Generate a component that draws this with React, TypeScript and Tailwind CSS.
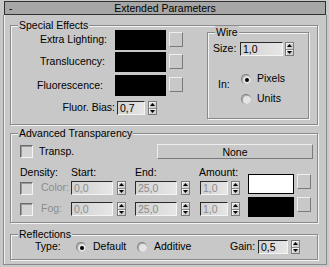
import React from "react";

const Spinner = () => (
  <div className="w-[9px] h-[14px] flex flex-col border border-[#7a7a7a] bg-[#d0d0d0] shrink-0">
    <div className="flex-1 flex items-center justify-center border-b border-[#8a8a8a] shadow-[inset_1px_1px_0_#f4f4f4]">
      <svg width="5" height="3" viewBox="0 0 5 3"><path d="M2.5 0L5 3H0z" fill="#000" /></svg>
    </div>
    <div className="flex-1 flex items-center justify-center shadow-[inset_1px_1px_0_#f4f4f4]">
      <svg width="5" height="3" viewBox="0 0 5 3"><path d="M0 0H5L2.5 3z" fill="#000" /></svg>
    </div>
  </div>
);

const NumInput = ({ value, w, disabled }: { value: string; w: string; disabled?: boolean }) => (
  <div
    className={`${w} h-[14px] shrink-0 border-t border-l border-t-[#2a2a2a] border-l-[#2a2a2a] border-b border-r border-b-[#f4f4f4] border-r-[#f4f4f4] bg-gradient-to-r from-[#d2d2d2] to-[#e6e6e6] pl-[2px] leading-[12px] ${
      disabled ? "text-[#8c8c8c]" : "text-black"
    }`}
  >
    {value}
  </div>
);

const Check = () => (
  <div className="w-[13px] h-[13px] shrink-0 border-t border-l border-t-[#6a6a6a] border-l-[#6a6a6a] border-b border-r border-b-[#f4f4f4] border-r-[#f4f4f4] bg-[#d4d4d4] shadow-[inset_1px_1px_0_#9a9a9a]" />
);

const Radio = ({ on }: { on?: boolean }) => (
  <div className="w-[10px] h-[10px] shrink-0 rounded-full bg-[#e4e4e4] border-t border-l border-[#808080] border-b-[#f6f6f6] border-r-[#f6f6f6] flex items-center justify-center shadow-[inset_1px_1px_0_#a8a8a8]">
    {on && <div className="w-[4px] h-[4px] rounded-full bg-black" />}
  </div>
);

const SmallBtn = () => (
  <div className="w-[14px] h-[15px] shrink-0 bg-[#c8c8c8] border border-t-[#eeeeee] border-l-[#eeeeee] border-b-[#7a7a7a] border-r-[#7a7a7a]" />
);

const Group = ({
  label,
  className,
  children,
}: {
  label: string;
  className: string;
  children: React.ReactNode;
}) => (
  <div
    className={`relative border border-[#8a8a8a] shadow-[inset_1px_1px_0_#f2f2f2,1px_1px_0_#f2f2f2] ${className}`}
  >
    <div className="absolute left-[7px] -top-[7px] bg-[#c8c8c8] px-[1px] leading-[12px]">{label}</div>
    {children}
  </div>
);

export default function App() {
  return (
    <div className="w-[329px] h-[267px] bg-[#c8c8c8] overflow-hidden flex flex-col pt-[1px] pl-[3px] pr-[2px] pb-[2px] font-['Liberation_Sans',Arial,sans-serif] text-[10.5px] text-black">
      {/* title bar */}
      <div className="ml-[1px] mr-[1px] h-[14px] shrink-0 bg-[#a6a6a6] border border-[#303030] relative flex items-center justify-center leading-[12px]">
        <span className="absolute left-[4px] top-[0px]">-</span>
        <span>Extended Parameters</span>
      </div>

      {/* panel */}
      <div className="flex-1 border-l border-r border-b border-[#8a8a8a] shadow-[inset_1px_0_0_#eeeeee] pl-[6px] pr-[8px] pt-[10px] flex flex-col">
        {/* Special Effects */}
        <Group label="Special Effects" className="h-[100px] shrink-0 flex">
          <div className="w-[172px] shrink-0 flex flex-col pt-[4px]">
            <div className="flex items-center h-[20px]">
              <div className="w-[96px] text-right">Extra Lighting:</div>
              <div className="ml-[8px] w-[51px] h-[20px] bg-black" />
              <div className="ml-[3px] self-start mt-[2px]">
                <SmallBtn />
              </div>
            </div>
            <div className="flex items-center h-[20px] mt-[2px]">
              <div className="w-[94px] text-right">Translucency:</div>
              <div className="ml-[10px] w-[51px] h-[20px] bg-black" />
              <div className="ml-[3px] self-start mt-[2px]">
                <SmallBtn />
              </div>
            </div>
            <div className="flex items-center h-[21px] mt-[3px]">
              <div className="w-[92px] text-right">Fluorescence:</div>
              <div className="ml-[12px] w-[51px] h-[21px] bg-black" />
              <div className="ml-[3px] self-start mt-[2px]">
                <SmallBtn />
              </div>
            </div>
            <div className="flex items-center h-[14px] mt-[5px]">
              <div className="w-[104px] text-right">Fluor. Bias:</div>
              <div className="ml-[2px]">
                <NumInput value="0,7" w="w-[28px]" />
              </div>
              <div className="ml-[3px]">
                <Spinner />
              </div>
            </div>
          </div>
          <div className="ml-[24px] mt-[6px] w-[102px] h-[87px]">
            <Group label="Wire" className="w-[102px] h-[87px] flex flex-col">
              <div className="flex items-center h-[14px] mt-[9px] pl-[5px]">
                <div className="w-[27px]">Size:</div>
                <NumInput value="1,0" w="w-[43px]" />
                <div className="ml-[2px]">
                  <Spinner />
                </div>
              </div>
              <div className="flex mt-[16px] pl-[10px]">
                <div className="w-[23px] mt-[6px] leading-[12px]">In:</div>
                <div className="flex flex-col">
                  <div className="flex items-center h-[14px]">
                    <Radio on />
                    <span className="ml-[6px]">Pixels</span>
                  </div>
                  <div className="flex items-center h-[14px] mt-[6px]">
                    <Radio />
                    <span className="ml-[6px]">Units</span>
                  </div>
                </div>
              </div>
            </Group>
          </div>
        </Group>

        {/* Advanced Transparency */}
        <Group label="Advanced Transparency" className="mt-[8px] h-[90px] shrink-0 flex flex-col">
          <div className="flex items-center h-[15px] mt-[10px] pl-[9px] pr-[4px]">
            <Check />
            <span className="ml-[6px]">Transp.</span>
            <div className="ml-auto w-[156px] h-[15px] bg-[#c8c8c8] border border-t-[#eeeeee] border-l-[#eeeeee] border-b-[#7a7a7a] border-r-[#7a7a7a] flex items-center justify-center leading-[12px]">
              None
            </div>
          </div>
          <div className="flex">
            <div className="flex flex-col pl-[9px]">
              <div className="flex h-[12px] leading-[12px] mt-[7px]">
                <div className="w-[51px]">Density:</div>
                <div className="w-[64px]">Start:</div>
                <div className="w-[64px]">End:</div>
                <div>Amount:</div>
              </div>
              <div className="flex items-center h-[14px] mt-[3px]">
                <div className="w-[51px] flex items-center">
                  <Check />
                  <span className="ml-[8px] text-[#8c8c8c]">Color:</span>
                </div>
                <div className="w-[64px] flex items-center">
                  <NumInput value="0,0" w="w-[42px]" disabled />
                  <div className="ml-[4px]">
                    <Spinner />
                  </div>
                </div>
                <div className="w-[65px] flex items-center">
                  <NumInput value="25,0" w="w-[42px]" disabled />
                  <div className="ml-[4px]">
                    <Spinner />
                  </div>
                </div>
                <div className="flex items-center">
                  <NumInput value="1,0" w="w-[28px]" disabled />
                  <div className="ml-[3px]">
                    <Spinner />
                  </div>
                </div>
              </div>
              <div className="flex items-center h-[14px] mt-[7px]">
                <div className="w-[51px] flex items-center">
                  <Check />
                  <span className="ml-[8px] text-[#8c8c8c]">Fog:</span>
                </div>
                <div className="w-[64px] flex items-center">
                  <NumInput value="0,0" w="w-[42px]" disabled />
                  <div className="ml-[4px]">
                    <Spinner />
                  </div>
                </div>
                <div className="w-[65px] flex items-center">
                  <NumInput value="25,0" w="w-[42px]" disabled />
                  <div className="ml-[4px]">
                    <Spinner />
                  </div>
                </div>
                <div className="flex items-center">
                  <NumInput value="1,0" w="w-[28px]" disabled />
                  <div className="ml-[3px]">
                    <Spinner />
                  </div>
                </div>
              </div>
            </div>
            <div className="ml-[8px] mt-[15px] flex flex-col">
              <div className="flex">
                <div className="w-[46px] h-[20px] bg-white border border-black" />
                <div className="ml-[3px]">
                  <SmallBtn />
                </div>
              </div>
              <div className="flex mt-[3px]">
                <div className="w-[46px] h-[20px] bg-black" />
                <div className="ml-[3px]">
                  <SmallBtn />
                </div>
              </div>
            </div>
          </div>
        </Group>

        {/* Reflections */}
        <Group label="Reflections" className="mt-[11px] h-[26px] shrink-0 flex flex-col">
          <div className="flex items-center h-[14px] mt-[5px] pl-[24px]">
            <div className="w-[41px]">Type:</div>
            <Radio on />
            <span className="ml-[7px] w-[44px]">Default</span>
            <Radio />
            <span className="ml-[7px] w-[76px]">Additive</span>
            <div className="w-[28px]">Gain:</div>
            <NumInput value="0,5" w="w-[30px]" />
            <div className="ml-[3px]">
              <Spinner />
            </div>
          </div>
        </Group>
      </div>
    </div>
  );
}
